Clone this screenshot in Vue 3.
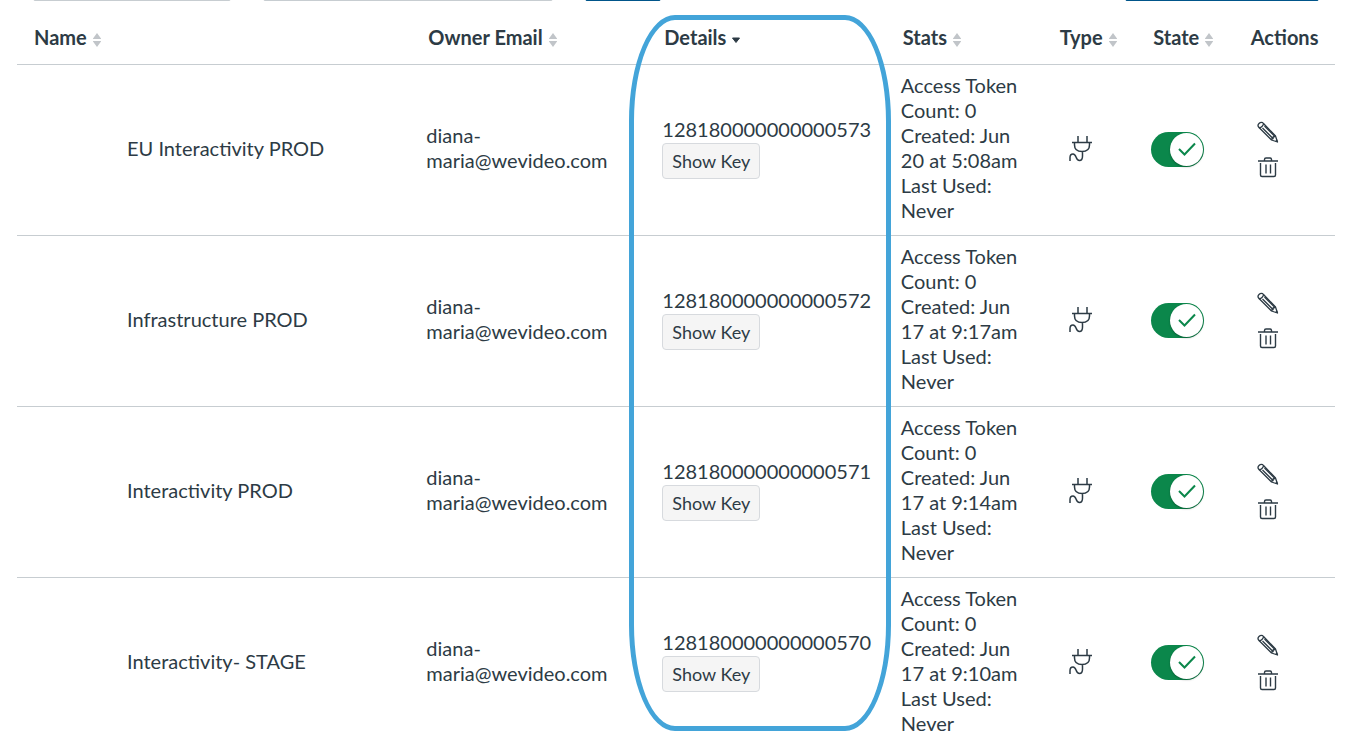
<script setup>
import { ref } from 'vue'

const columns = [
  { key: 'name', label: 'Name', sortable: true },
  { key: 'owner', label: 'Owner Email', sortable: true },
  { key: 'details', label: 'Details', sortable: true },
  { key: 'stats', label: 'Stats', sortable: true },
  { key: 'type', label: 'Type', sortable: true },
  { key: 'state', label: 'State', sortable: true },
  { key: 'actions', label: 'Actions', sortable: false },
]

const sortedBy = ref('details')

const keys = ref([
  { id: '128180000000000573', name: 'EU Interactivity PROD', created: 'Jun 20 at 5:08am', on: true },
  { id: '128180000000000572', name: 'Infrastructure PROD', created: 'Jun 17 at 9:17am', on: true },
  { id: '128180000000000571', name: 'Interactivity PROD', created: 'Jun 17 at 9:14am', on: true },
  { id: '128180000000000570', name: 'Interactivity- STAGE', created: 'Jun 17 at 9:10am', on: true },
])
</script>

<template>
  <main class="page">
    <div class="toolbar">
      <input class="field field--filter" type="text" aria-label="Filter by type" />
      <input class="field field--search" type="text" aria-label="Search keys" />
      <button class="primary primary--search" type="button" aria-label="Search"></button>
      <button class="primary primary--add" type="button" aria-label="Add key"></button>
    </div>

    <div class="table-wrap">
      <table class="keys">
        <colgroup>
          <col v-for="column in columns" :key="column.key" :class="`col-${column.key}`" />
        </colgroup>
        <thead>
          <tr>
            <th v-for="column in columns" :key="column.key" :class="`head-${column.key}`" scope="col">
              <button v-if="column.sortable" class="sort" type="button" @click="sortedBy = column.key">
                {{ column.label }}
                <svg v-if="sortedBy === column.key" class="sort-icon" viewBox="0 0 10 14" aria-hidden="true">
                  <path d="M1.500 5h7L5 9.500z" fill="#2d3b45" stroke="#2d3b45" stroke-linejoin="round" />
                </svg>
                <svg v-else class="sort-icon" viewBox="0 0 10 14" aria-hidden="true">
                  <path d="M5 0L9 5.500V6H1v-.500zM1 8h8v.500L5 14 1 8.500z" fill="#c1c5c9" />
                </svg>
              </button>
              <span v-else>{{ column.label }}</span>
            </th>
          </tr>
        </thead>
        <tbody>
          <tr v-for="item in keys" :key="item.id">
            <td class="cell-name">{{ item.name }}</td>
            <td>diana-maria@wevideo.com</td>
            <td>
              <div>{{ item.id }}</div>
              <button class="show-key" type="button">Show Key</button>
            </td>
            <td class="cell-stats">
              <div>Access Token Count: 0</div>
              <div>Created: {{ item.created }}</div>
              <div>Last Used: Never</div>
            </td>
            <td class="cell-type">
              <svg class="plug" viewBox="0 0 24 28" role="img" aria-label="API key">
                <path
                  d="M9 1v6M18 1v6M3 7.500h20M5.500 8v2c0 4.500 3 6.500 7.500 6.500s7.500-2 7.500-6.500V8M13.500 17v4c0 3-1 4.500-3 4.500-4.500 0-2.500-6.500-6.500-6.500C1.500 19 1 20.500 1 22.500V26"
                  fill="none"
                  stroke="#2d3b45"
                  stroke-width="1.500"
                />
              </svg>
            </td>
            <td class="cell-state">
              <label class="toggle">
                <input v-model="item.on" type="checkbox" :aria-label="`${item.name} state`" />
                <span class="toggle-knob">
                  <svg viewBox="0 0 20 16" aria-hidden="true">
                    <path d="M2 8l5.500 5.500L18 2.500" fill="none" stroke="#0b874b" stroke-width="2" />
                  </svg>
                </span>
              </label>
            </td>
            <td class="cell-actions">
              <div class="actions">
                <button class="icon-button" type="button" :aria-label="`Edit ${item.name}`">
                  <svg viewBox="0 0 22 22" aria-hidden="true">
                    <g fill="none" stroke="#2d3b45" stroke-width="1.300" stroke-linejoin="round">
                      <path d="M2 6.500L14.500 19l6 2-2-6L6.500 2.500C5.500 1 3.500 1 2 2.500S1 5.500 2 6.500z" />
                      <path d="M2 6.500C4 7 6.500 4.500 6.500 2.500M5.500 7l11 11M7.500 5l10.500 10.500M14.500 19c.500-2 2-3.500 4-4" />
                    </g>
                    <path d="M18 20.200l3 1-1-3z" fill="#2d3b45" />
                  </svg>
                </button>
                <button class="icon-button" type="button" :aria-label="`Delete ${item.name}`">
                  <svg viewBox="0 0 22 22" aria-hidden="true">
                    <path
                      d="M1 5h20M7.500 5V3.500c0-1 .500-1.500 1.500-1.500h4c1 0 1.500.500 1.500 1.500V5M3.500 7v12c0 1 .500 1.500 1.500 1.500h12c1 0 1.500-.500 1.500-1.500V7M9 8.500v9M13.500 8.500v9"
                      fill="none"
                      stroke="#2d3b45"
                      stroke-width="1.400"
                    />
                  </svg>
                </button>
              </div>
            </td>
          </tr>
        </tbody>
      </table>
      <div class="details-outline" aria-hidden="true"></div>
    </div>
  </main>
</template>

<style>
body {
  background: #ffffff;
}
</style>

<style scoped>
.page {
  height: 100vh;
  overflow: hidden;
  background: #ffffff;
  color: #2d3b45;
  font-family: Lato, 'Liberation Sans', sans-serif;
  font-size: 20px;
  line-height: 25px;
}

button {
  font: inherit;
  color: inherit;
  cursor: pointer;
}

/* the filter bar is scrolled out, only its bottom edge stays visible */
.toolbar {
  display: flex;
  align-items: flex-end;
  height: 1px;
  padding: 0 38px 0 33px;
  overflow: hidden;
}

.field,
.primary {
  box-sizing: border-box;
  flex: none;
  height: 44px;
  margin: 0;
  border: 1px solid #c7cdd1;
  border-radius: 2px;
}

.field--filter {
  width: 198px;
}

.field--search {
  width: 290px;
  margin-left: 32px;
}

.primary {
  border-color: #00558a;
  background: #00558a;
}

.primary--search {
  width: 76px;
  margin-left: 32px;
}

.primary--add {
  width: 194px;
  margin-left: auto;
}

.table-wrap {
  position: relative;
  margin: 0 22px 0 17px;
}

.keys {
  width: 100%;
  table-layout: fixed;
  border-collapse: separate;
  border-spacing: 0;
}

.col-name {
  width: 30.3%;
}

.col-owner {
  width: 17.9%;
}

.col-details {
  width: 18.1%;
}

.col-stats {
  width: 11.9%;
}

.col-type {
  width: 7.1%;
}

.col-state {
  width: 7.4%;
}

.col-actions {
  width: 7.3%;
}

.keys th,
.keys td {
  padding: 8px 10px 12px;
  border-bottom: 1px solid #c7cdd1;
  text-align: left;
  vertical-align: middle;
}

.keys th {
  padding: 24px 0 14px 12px;
  font-weight: 700;
  white-space: nowrap;
}

.keys .head-name {
  padding-left: 17px;
}

.sort {
  display: flex;
  align-items: center;
  gap: 5px;
  padding: 0;
  border: 0;
  background: none;
  font-weight: 700;
}

.sort-icon {
  width: 10px;
  height: 14px;
  margin-top: 4px;
}

.keys .cell-name {
  padding-left: 110px;
}

.keys .cell-stats {
  padding-right: 24px;
}

.show-key {
  display: block;
  height: 36px;
  margin-top: 1px;
  padding: 0 9px;
  border: 1px solid #d7dade;
  border-radius: 4px;
  background: #f5f5f5;
  font-size: 18px;
  line-height: 24px;
}

.keys .cell-type,
.keys .cell-state,
.keys .cell-actions {
  padding-top: 9px;
  padding-bottom: 11px;
}

.keys .cell-type {
  padding-left: 21px;
}

.plug {
  display: block;
  width: 24px;
  height: 28px;
}

.toggle {
  position: relative;
  display: block;
  width: 53px;
  height: 35px;
  cursor: pointer;
}

.toggle input {
  display: block;
  appearance: none;
  width: 53px;
  height: 35px;
  margin: 0;
  border-radius: 18px;
  background: #6b7780;
  cursor: pointer;
}

.toggle input:checked {
  background: #0b874b;
}

.toggle-knob {
  position: absolute;
  top: 1px;
  left: 1px;
  display: flex;
  align-items: center;
  justify-content: center;
  width: 33px;
  height: 33px;
  border-radius: 50%;
  background: #ffffff;
  box-shadow: 0 1px 2px rgba(0, 0, 0, 0.3);
  pointer-events: none;
}

.toggle input:checked + .toggle-knob {
  left: 19px;
}

.toggle-knob svg {
  width: 20px;
  height: 16px;
}

.keys .cell-actions {
  padding-left: 18px;
}

.actions {
  display: flex;
  flex-direction: column;
  gap: 13px;
}

.icon-button {
  width: 22px;
  height: 22px;
  padding: 0;
  border: 0;
  background: none;
}

.icon-button svg {
  display: block;
  width: 22px;
  height: 22px;
}

/* highlight around the details column */
.details-outline {
  position: absolute;
  top: 14px;
  left: 46.4%;
  box-sizing: border-box;
  width: 262px;
  height: 716px;
  border: 5px solid #43a4d9;
  border-radius: 46px / 106px;
  pointer-events: none;
}
</style>
